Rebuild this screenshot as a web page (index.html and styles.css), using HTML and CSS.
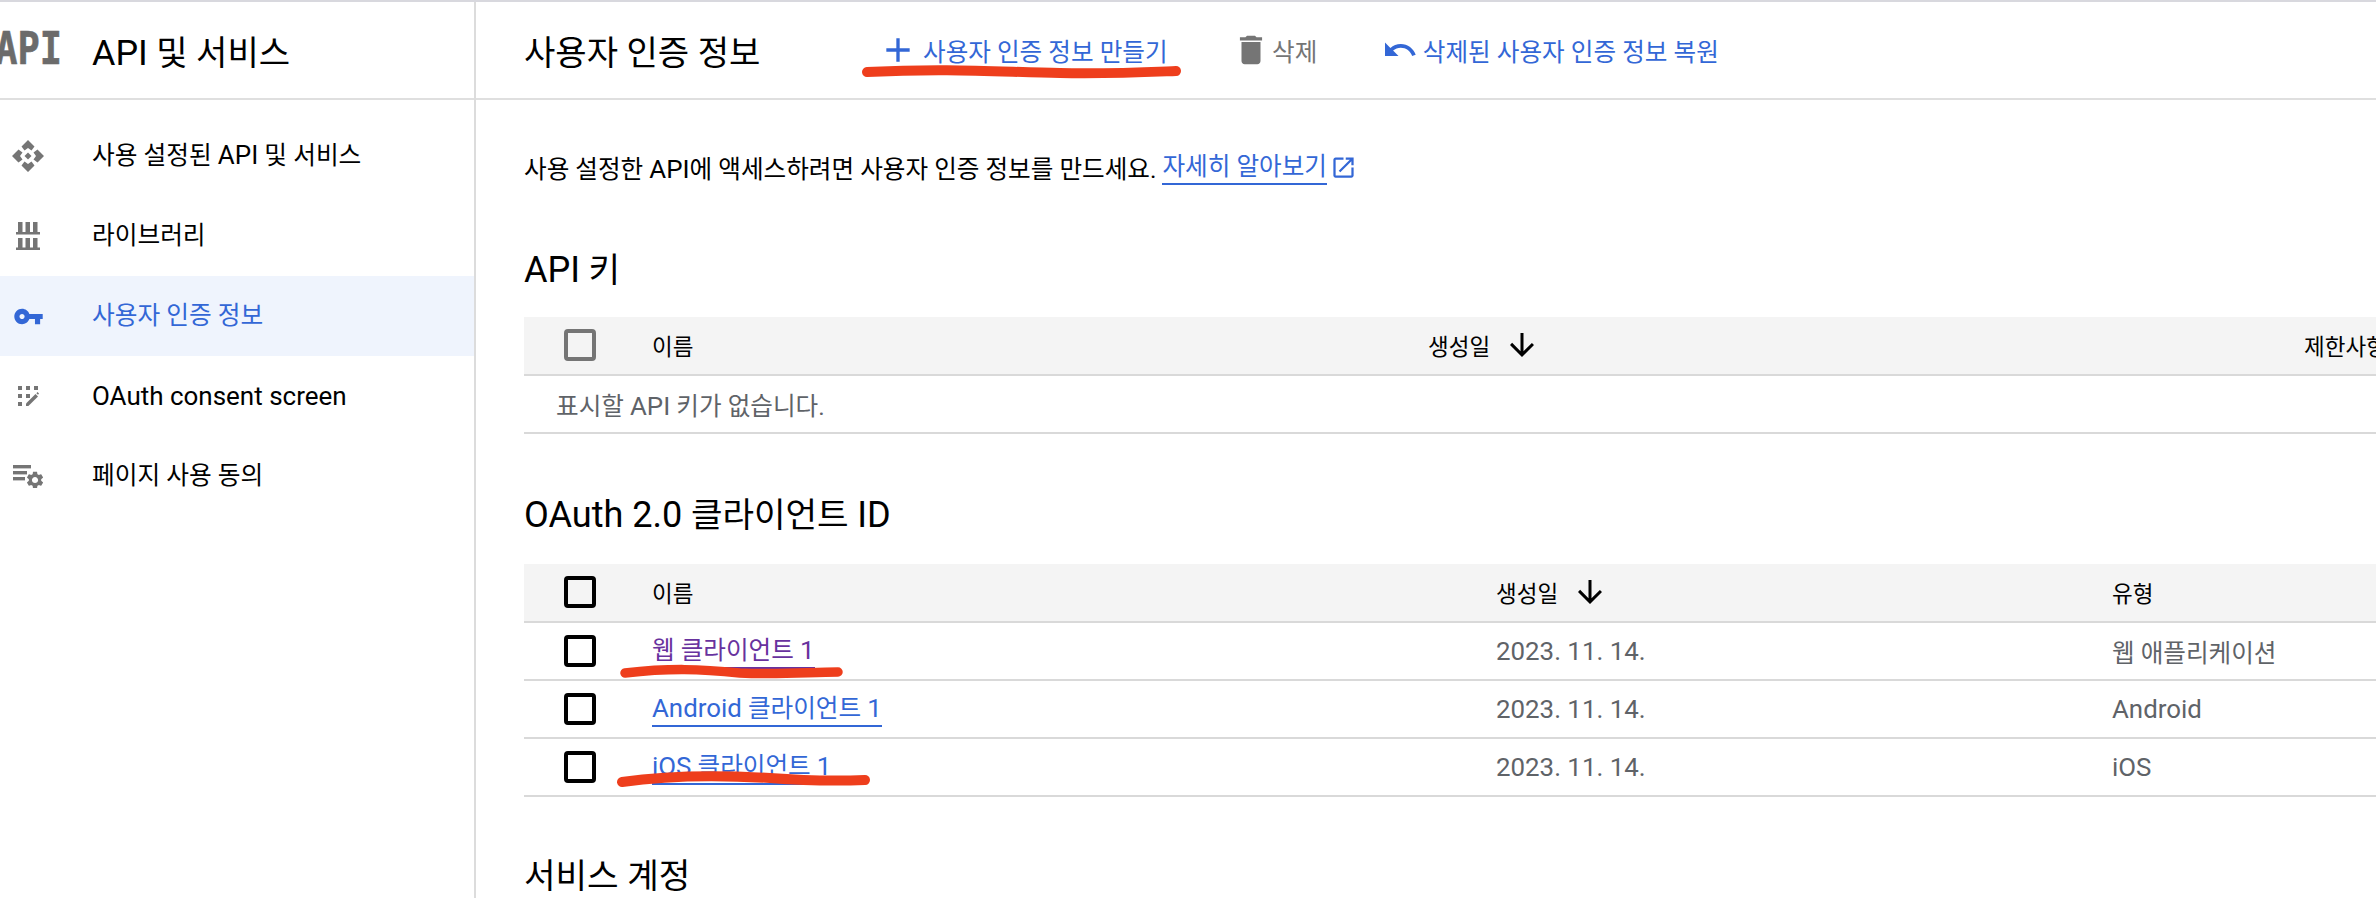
FILE: index.html
```html
<!doctype html>
<html lang="ko">
<head>
    <meta charset="UTF-8">
    <meta name="viewport" content="width=device-width, initial-scale=1.0">
    <title>사용자 인증 정보</title>
    <link rel="stylesheet" href="styles.css">
</head>
<body>
<div class="page">
    <aside class="sidebar">
        <div class="side-head">
            <div class="logo"><span>API</span></div>
            <h1><span class="en">API</span> 및 서비스</h1>
        </div>
        <nav class="side-nav">
            <a class="nav-item">
                <span class="nav-icon">
                    <svg width="32" height="32" viewBox="0 0 32 32" fill="#757575">
                        <path d="M16 0l6.5 6.5-3 4-3.5-2.5-3.5 2.5-3-4z"/>
                        <path d="M16 32l-6.5-6.5 3-4 3.5 2.5 3.5-2.5 3 4z"/>
                        <path d="M0 16l6.5-6.5 4 3-2.5 3.5 2.5 3.5-4 3z"/>
                        <path d="M32 16l-6.5-6.5-4 3 2.5 3.5-2.5 3.5 4 3z"/>
                        <path d="M16 12.5l3.5 3.5-3.5 3.5-3.5-3.5z"/>
                    </svg>
                </span>
                <span class="nav-label">사용 설정된 <span class="en">API</span> 및 서비스</span>
            </a>
            <a class="nav-item">
                <span class="nav-icon">
                    <svg width="24" height="28" viewBox="0 0 24 28" fill="#757575">
                        <rect x="2" y="0" width="4.5" height="10"/>
                        <rect x="9.5" y="0" width="4.5" height="10"/>
                        <rect x="17" y="0" width="4.5" height="10"/>
                        <rect x="0" y="10" width="24" height="2.5"/>
                        <rect x="2" y="16" width="4.5" height="10"/>
                        <rect x="9.5" y="16" width="4.5" height="10"/>
                        <rect x="17" y="16" width="4.5" height="10"/>
                        <rect x="0" y="25.5" width="24" height="2.5"/>
                    </svg>
                </span>
                <span class="nav-label">라이브러리</span>
            </a>
            <a class="nav-item active">
                <span class="nav-icon">
                    <svg width="31" height="31" viewBox="0 0 24 24" fill="#3367d6">
                        <path d="M12.65 10C11.83 7.67 9.61 6 7 6c-3.31 0-6 2.69-6 6s2.69 6 6 6c2.61 0 4.83-1.67 5.65-4H17v4h4v-4h2v-4H12.65zM7 14c-1.1 0-2-.9-2-2s.9-2 2-2 2 .9 2 2-.9 2-2 2z"/>
                    </svg>
                </span>
                <span class="nav-label">사용자 인증 정보</span>
            </a>
            <a class="nav-item">
                <span class="nav-icon">
                    <svg width="21" height="20" viewBox="0 0 21 20" fill="#757575">
                        <rect x="0" y="0" width="4" height="4"/>
                        <rect x="8" y="0" width="4" height="4"/>
                        <rect x="16" y="0" width="4" height="4"/>
                        <rect x="0" y="8" width="4" height="4"/>
                        <rect x="8" y="8" width="4" height="4"/>
                        <rect x="0" y="16" width="4" height="4"/>
                        <path d="M8 20v-2.4L17.5 8 20 10.5 10.4 20z"/>
                        <path d="M18.4 7.2L19.5 6 21 7.5 20 8.8z"/>
                    </svg>
                </span>
                <span class="en">OAuth consent screen</span>
            </a>
            <a class="nav-item">
                <span class="nav-icon">
                    <svg width="30" height="23" viewBox="0 0 30 23" fill="#757575">
                        <rect x="0" y="0" width="18" height="3.4"/>
                        <rect x="0" y="6" width="14" height="3.4"/>
                        <rect x="0" y="12" width="12" height="3.4"/>
                        <g transform="translate(11.7 4.7) scale(.86)">
                            <path d="M19.14 12.94c.04-.3.06-.61.06-.94 0-.32-.02-.64-.07-.94l2.03-1.58c.18-.14.23-.41.12-.61l-1.92-3.32c-.12-.22-.37-.29-.59-.22l-2.39.96c-.5-.38-1.03-.7-1.62-.94l-.36-2.54c-.04-.24-.24-.41-.48-.41h-3.84c-.24 0-.43.17-.47.41l-.36 2.54c-.59.24-1.13.57-1.62.94l-2.39-.96c-.22-.08-.47 0-.59.22L2.74 8.87c-.12.21-.08.47.12.61l2.03 1.58c-.05.3-.09.63-.09.94s.02.64.07.94l-2.03 1.58c-.18.14-.23.41-.12.61l1.92 3.32c.12.22.37.29.59.22l2.39-.96c.5.38 1.03.7 1.62.94l.36 2.54c.05.24.24.41.48.41h3.84c.24 0 .44-.17.47-.41l.36-2.54c.59-.24 1.13-.56 1.62-.94l2.39.96c.22.08.47 0 .59-.22l1.92-3.32c.12-.22.07-.47-.12-.61l-2.01-1.58zM12 15.6c-1.98 0-3.6-1.62-3.6-3.6s1.62-3.6 3.6-3.6 3.6 1.62 3.6 3.6-1.62 3.6-3.6 3.6z"/>
                        </g>
                    </svg>
                </span>
                <span class="nav-label">페이지 사용 동의</span>
            </a>
        </nav>
    </aside>

    <main class="main">
        <header class="main-head">
            <h2 class="page-title">사용자 인증 정보</h2>
            <div class="actions">
                <a class="action">
                    <svg width="40" height="40" viewBox="0 0 24 24" fill="#3367d6"><path d="M19 13h-6v6h-2v-6H5v-2h6V5h2v6h6v2z"/></svg>
                    사용자 인증 정보 만들기
                </a>
                <a class="action disabled">
                    <svg width="38" height="38" viewBox="0 0 24 24" fill="#757575"><path d="M6 19c0 1.1.9 2 2 2h8c1.1 0 2-.9 2-2V7H6v12zM19 4h-3.5l-1-1h-5l-1 1H5v2h14V4z"/></svg>
                    삭제
                </a>
                <a class="action">
                    <svg width="36" height="36" viewBox="0 0 24 24" fill="#3367d6"><path d="M12.5 8c-2.65 0-5.05.99-6.9 2.6L2 7v9h9l-3.62-3.62c1.39-1.16 3.16-1.88 5.12-1.88 3.54 0 6.55 2.31 7.6 5.5l2.37-.78C21.08 11.03 17.15 8 12.5 8z"/></svg>
                    삭제된 사용자 인증 정보 복원
                </a>
            </div>
        </header>

        <div class="content">
            <p class="intro">
                <span>사용 설정한 <span class="en">API</span>에 액세스하려면 사용자 인증 정보를 만드세요.</span>
                <a class="link">자세히 알아보기</a>
                <svg class="ext" width="27" height="27" viewBox="0 0 24 24" fill="#3367d6"><path d="M19 19H5V5h7V3H5c-1.11 0-2 .9-2 2v14c0 1.1.89 2 2 2h14c1.1 0 2-.9 2-2v-7h-2v7zM14 3v2h3.59l-9.83 9.83 1.41 1.41L19 6.41V10h2V3h-7z"/></svg>
            </p>

            <h3 class="section-title first"><span class="en">API</span> 키</h3>
            <table class="grid api-table">
                <thead>
                    <tr>
                        <th class="col-check"><input type="checkbox" class="check muted"></th>
                        <th class="col-name">이름</th>
                        <th class="col-date">
                            <span class="sort">생성일
                                <svg width="36" height="36" viewBox="0 0 24 24" fill="#000"><path d="M20 12l-1.41-1.41L13 16.17V4h-2v12.17l-5.58-5.59L4 12l8 8 8-8z"/></svg>
                            </span>
                        </th>
                        <th>제한사항</th>
                    </tr>
                </thead>
                <tbody>
                    <tr><td colspan="4" class="empty">표시할 <span class="en">API</span> 키가 없습니다.</td></tr>
                </tbody>
            </table>

            <h3 class="section-title second"><span class="en">OAuth 2.0</span> 클라이언트 <span class="en">ID</span></h3>
            <table class="grid oauth-table">
                <thead>
                    <tr>
                        <th class="col-check"><input type="checkbox" class="check"></th>
                        <th class="col-name">이름</th>
                        <th class="col-date">
                            <span class="sort">생성일
                                <svg width="36" height="36" viewBox="0 0 24 24" fill="#000"><path d="M20 12l-1.41-1.41L13 16.17V4h-2v12.17l-5.58-5.59L4 12l8 8 8-8z"/></svg>
                            </span>
                        </th>
                        <th>유형</th>
                    </tr>
                </thead>
                <tbody>
                    <tr>
                        <td><input type="checkbox" class="check"></td>
                        <td><a class="link visited">웹 클라이언트 <span class="en">1</span></a></td>
                        <td class="en">2023. 11. 14.</td>
                        <td>웹 애플리케이션</td>
                    </tr>
                    <tr>
                        <td><input type="checkbox" class="check"></td>
                        <td><a class="link"><span class="en">Android</span> 클라이언트 <span class="en">1</span></a></td>
                        <td class="en">2023. 11. 14.</td>
                        <td class="en">Android</td>
                    </tr>
                    <tr>
                        <td><input type="checkbox" class="check"></td>
                        <td><a class="link"><span class="en">iOS</span> 클라이언트 <span class="en">1</span></a></td>
                        <td class="en">2023. 11. 14.</td>
                        <td class="en">iOS</td>
                    </tr>
                </tbody>
            </table>

            <h3 class="section-title third">서비스 계정</h3>
        </div>
    </main>

    <!-- red pen marks drawn over the screenshot -->
    <svg class="marks" width="2376" height="898" viewBox="0 0 2376 898" fill="none" stroke="#ee3e1c" stroke-linecap="round">
        <path stroke-width="10" d="M867 72C950 68 1000 72 1060 73C1110 74 1150 72 1176 71"/>
        <path stroke-width="9.5" d="M625 673C670 668 700 669 740 673C780 675 810 672 838 672"/>
        <path stroke-width="10" d="M622 782C670 775 720 775 770 778C810 781 840 781 865 780"/>
    </svg>
</div>
</body>
</html>
```

FILE: styles.css
```css
* {
    box-sizing: border-box;
}
html, body {
    height: 100%;
}
body {
    margin: 0;
    overflow: hidden;
    background: #ffffff;
    color: #000000;
    font-family: Roboto, "Noto Sans CJK KR", sans-serif;
}
.page {
    position: relative;
    display: flex;
    height: 898px;
    border-top: 2px solid #d8d8de;
    overflow: hidden;
}
.marks {
    position: absolute;
    top: -2px;
    left: 0;
    pointer-events: none;
}
/* latin runs sit a bit bigger than the hangul around them */
.en {
    font-size: 1.052em;
}

/* sidebar */
.sidebar {
    flex: 0 0 476px;
    border-right: 2px solid #dcdcdc;
}
.side-head {
    display: flex;
    align-items: center;
    height: 98px;
    border-bottom: 2px solid #dfdfdf;
}
.logo {
    width: 60px;
    height: 44px;
    margin-right: 32px;
    overflow: hidden;
    display: flex;
    align-items: center;
    justify-content: flex-end;
    color: #6b6b6b;
    font-family: "DejaVu Sans Mono", monospace;
    font-weight: 700;
    font-size: 37px;
    line-height: 44px;
}
.logo span {
    display: block;
    transform: translateX(2px) scaleY(1.19);
    -webkit-text-stroke: 0.5px #6b6b6b;
}
.side-head h1 {
    margin: 0;
    font-size: 34.1px;
    font-weight: 400;
}
.side-nav {
    padding-top: 16px;
}
.nav-item {
    display: flex;
    align-items: center;
    height: 80px;
    font-size: 24.7px;
    color: #000000;
}
.nav-icon {
    display: flex;
    align-items: center;
    justify-content: center;
    width: 56px;
    margin-right: 36px;
}
.nav-label {
    margin-bottom: 6px;
}
.nav-item.active {
    background: #eff4fd;
    color: #3367d6;
}

/* top bar */
.main {
    flex: 1;
    min-width: 0;
}
.main-head {
    display: flex;
    align-items: center;
    height: 98px;
    padding-left: 48px;
    border-bottom: 2px solid #dfdfdf;
}
.page-title {
    width: 354px;
    margin: 0;
    font-size: 34.1px;
    font-weight: 400;
}
.actions {
    display: flex;
    align-items: center;
    gap: 64.5px;
}
.action {
    display: flex;
    align-items: center;
    gap: 5px;
    font-size: 24.6px;
    color: #3367d6;
}
.action.disabled {
    color: #757575;
    gap: 2px;
}

/* page body */
.content {
    padding-left: 48px;
}
.intro {
    display: flex;
    align-items: center;
    gap: 6px;
    height: 40px;
    margin: 47px 0 0;
    font-size: 24.6px;
    white-space: nowrap;
}
.link {
    display: inline-block;
    color: #3367d6;
    line-height: 33px;
    border-bottom: 2px solid #3367d6;
}
.link.visited {
    color: #68329e;
    border-bottom-color: #68329e;
}
.ext {
    margin-left: -3px;
}
.section-title {
    margin: 0;
    font-size: 34.3px;
    font-weight: 400;
    line-height: 46px;
}
.section-title.first {
    margin-top: 60px;
}
.section-title.second {
    margin-top: 58px;
}
.section-title.third {
    margin-top: 56px;
}

/* tables */
.grid {
    width: 2000px;
    margin-top: 26px;
    table-layout: fixed;
    border-collapse: collapse;
    font-size: 24.6px;
}
.api-table {
    margin-top: 24px;
}
.grid th {
    height: 58px;
    padding: 0 0 2px;
    background: #f4f4f4;
    border-bottom: 2px solid #d9d9d9;
    font-size: 22.5px;
    font-weight: 400;
    text-align: left;
    white-space: nowrap;
}
.grid td {
    height: 58px;
    padding: 0;
    border-bottom: 2px solid #d9d9d9;
    color: #5f6368;
    white-space: nowrap;
}
.col-check {
    width: 128px;
}
.api-table .col-name {
    width: 776px;
}
.api-table .col-date {
    width: 876px;
}
.oauth-table .col-name {
    width: 844px;
}
.oauth-table .col-date {
    width: 616px;
}
.grid td.empty {
    padding-left: 32px;
}
.sort {
    display: flex;
    align-items: center;
    gap: 14px;
}
.check {
    appearance: none;
    display: block;
    width: 32px;
    height: 32px;
    margin: 0 0 0 40px;
    border: 4px solid #000000;
    border-radius: 4px;
    background: transparent;
}
.check.muted {
    border-color: #757575;
}
```
